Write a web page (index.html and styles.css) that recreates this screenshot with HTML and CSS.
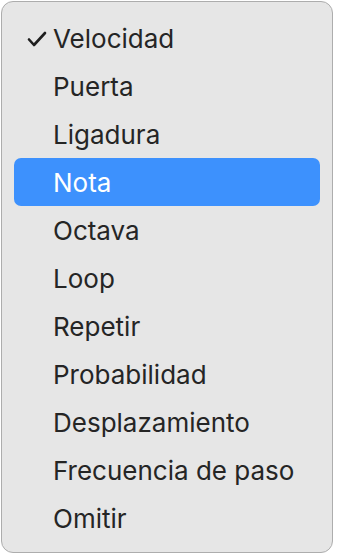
FILE: index.html
```html
<!DOCTYPE html>
<html lang="es">
<head>
    <meta charset="UTF-8">
    <meta name="viewport" content="width=device-width, initial-scale=1.0">
    <title>Menú</title>
    <link rel="stylesheet" href="styles.css">
</head>
<body>
    <div class="menu">
        <div class="item checked">
            <svg class="check" width="20" height="16" viewBox="0 0 20 16"><path d="M2 8.5 L7 14 L18 2" fill="none" stroke="#1f1f1f" stroke-width="2.6" stroke-linecap="round" stroke-linejoin="round"/></svg>
            Velocidad
        </div>
        <div class="item">Puerta</div>
        <div class="item">Ligadura</div>
        <div class="item active">Nota</div>
        <div class="item">Octava</div>
        <div class="item">Loop</div>
        <div class="item">Repetir</div>
        <div class="item">Probabilidad</div>
        <div class="item">Desplazamiento</div>
        <div class="item">Frecuencia de paso</div>
        <div class="item">Omitir</div>
    </div>
</body>
</html>
```

FILE: styles.css
```css
body {
    margin: 0;
    background: #ffffff;
    font-family: Inter, "Liberation Sans", sans-serif;
}
.menu {
    margin: 1px 0 0 1px;
    width: 330px;
    height: 528px;
    padding: 12px 0 10px 0;
    background: #e6e6e6;
    border: 1.5px solid #adadad;
    border-radius: 12px;
}
.item {
    position: relative;
    height: 48px;
    margin: 0 12px;
    padding-left: 39px;
    display: flex;
    align-items: center;
    font-size: 26px;
    color: #252525;
    border-radius: 7px;
}
.item.active {
    background: #3d91fd;
    color: #ffffff;
}
.check {
    position: absolute;
    left: 13px;
    top: 17px;
}
```
